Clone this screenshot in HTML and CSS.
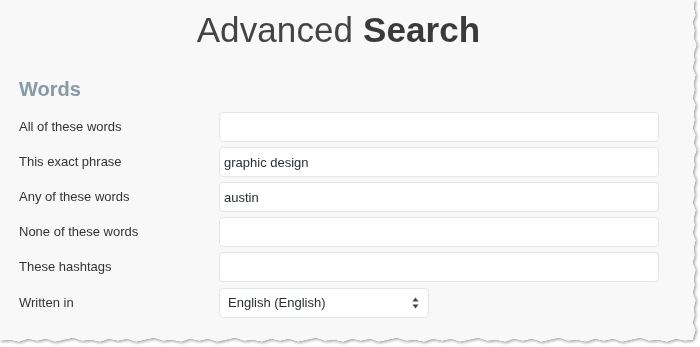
FILE: index.html
```html
<!DOCTYPE html>
<html lang="en">
<head>
<meta charset="utf-8">
<title>Advanced Search</title>
<link rel="stylesheet" href="styles.css">
</head>
<body>
<div class="sheet">
  <div class="paper">
    <div class="content">
      <h1 class="title"><span class="light">Advanced</span> <span class="bold">Search</span></h1>
      <h2 class="section">Words</h2>
      <div class="form">
        <label class="label" for="f1">All of these words</label>
        <input class="field" id="f1" type="text" value="">
        <label class="label" for="f2">This exact phrase</label>
        <input class="field" id="f2" type="text" value="graphic design">
        <label class="label" for="f3">Any of these words</label>
        <input class="field" id="f3" type="text" value="austin">
        <label class="label" for="f4">None of these words</label>
        <input class="field" id="f4" type="text" value="">
        <label class="label" for="f5">These hashtags</label>
        <input class="field" id="f5" type="text" value="">
        <label class="label lang-label" for="f6">Written in</label>
        <div class="select-wrap">
          <select class="select" id="f6">
            <option>English (English)</option>
          </select>
          <svg class="select-arrows" width="7" height="12" viewBox="0 0 7 12" aria-hidden="true">
            <path d="M3.5 0.5 L6.5 4.5 L0.5 4.5 Z" fill="#444"/>
            <path d="M3.5 11.5 L6.5 7.5 L0.5 7.5 Z" fill="#444"/>
          </svg>
        </div>
      </div>
    </div>
  </div>
</div>
</body>
</html>
```
FILE: styles.css
```css
html, body {
  margin: 0;
  padding: 0;
  background: #ffffff;
}

body {
  width: 700px;
  height: 347px;
  overflow: hidden;
  font-family: "Liberation Sans", Arial, sans-serif;
}

.sheet {
  width: 700px;
  height: 347px;
  filter: drop-shadow(0 0 0.6px #555) drop-shadow(1px 1px 1.5px rgba(0,0,0,0.35));
}

.paper {
  width: 700px;
  height: 347px;
  background: #f8f8f8;
  box-sizing: border-box;
  padding: 10px 0 0 19px;
  clip-path: polygon(0 0, 695px 0, 694px 8px, 696px 15px, 693px 22px, 695px 30px, 694px 38px, 697px 45px, 694px 53px, 695px 60px, 693px 68px, 696px 75px, 694px 83px, 695px 90px, 693px 98px, 696px 105px, 694px 113px, 695px 120px, 693px 128px, 696px 135px, 694px 143px, 697px 150px, 694px 158px, 695px 165px, 693px 173px, 696px 180px, 694px 188px, 695px 195px, 693px 203px, 696px 210px, 694px 218px, 695px 225px, 693px 233px, 696px 240px, 694px 248px, 695px 255px, 693px 263px, 696px 270px, 694px 278px, 695px 285px, 693px 293px, 696px 300px, 694px 308px, 695px 315px, 693px 323px, 696px 330px, 694px 336px, 693px 340px,
    685px 341px, 676px 339px, 667px 342px, 658px 340px, 649px 341px, 640px 338px, 631px 340px, 622px 342px, 613px 339px,
    604px 341px, 595px 339px, 586px 342px, 577px 340px, 568px 341px, 559px 338px, 550px 340px, 541px 342px, 532px 339px,
    523px 341px, 514px 339px, 505px 342px, 496px 340px, 487px 341px, 478px 338px, 469px 340px, 460px 342px, 451px 339px,
    442px 341px, 433px 339px, 424px 342px, 415px 340px, 406px 341px, 397px 338px, 388px 340px, 379px 342px, 370px 339px,
    361px 341px, 352px 339px, 343px 342px, 334px 340px, 325px 341px, 316px 338px, 307px 340px, 298px 342px, 289px 339px,
    280px 341px, 271px 339px, 262px 342px, 253px 340px, 244px 341px, 235px 338px, 226px 340px, 217px 342px, 208px 339px,
    199px 341px, 190px 339px, 181px 342px, 172px 340px, 163px 341px, 154px 338px, 145px 340px, 136px 342px, 127px 339px,
    118px 341px, 109px 339px, 100px 342px, 91px 340px, 82px 341px, 73px 338px, 64px 340px, 55px 342px, 46px 339px,
    37px 341px, 28px 339px, 19px 342px, 10px 340px, 0 341px);
}

.content {
  width: 639px;
}

.title {
  margin: 0;
  font-size: 35px;
  line-height: 40px;
  text-align: center;
  color: #3a3a3a;
  letter-spacing: 0.1px;
}

.title .light {
  font-weight: 400;
  color: #444;
}

.title .bold {
  font-weight: 700;
}

.section {
  margin: 27px 0 11px;
  font-size: 20px;
  line-height: 24px;
  font-weight: 700;
  color: #8899a6;
}

.form {
  display: grid;
  grid-template-columns: 200px 440px;
  grid-auto-rows: 30px;
  row-gap: 5px;
  align-items: center;
}

.label {
  font-size: 13px;
  color: #333;
  line-height: 16px;
}

.field {
  box-sizing: border-box;
  width: 440px;
  height: 30px;
  margin: 0;
  padding: 0 4px;
  border: 1px solid #e3e6e9;
  border-radius: 4px;
  background: #fff;
  font-family: "Liberation Sans", Arial, sans-serif;
  font-size: 13px;
  color: #292f33;
  outline: none;
}

.lang-label {
  margin-top: 1px;
}

.select-wrap {
  position: relative;
  width: 210px;
  height: 30px;
  margin-top: 1px;
}

.select {
  -webkit-appearance: none;
  appearance: none;
  box-sizing: border-box;
  width: 210px;
  height: 30px;
  margin: 0;
  padding: 0 20px 0 8px;
  border: 1px solid #e3e6e9;
  border-radius: 4px;
  background: #fff;
  font-family: "Liberation Sans", Arial, sans-serif;
  font-size: 13px;
  color: #292f33;
  outline: none;
}

.select-arrows {
  position: absolute;
  right: 10px;
  top: 9px;
  pointer-events: none;
}
```
